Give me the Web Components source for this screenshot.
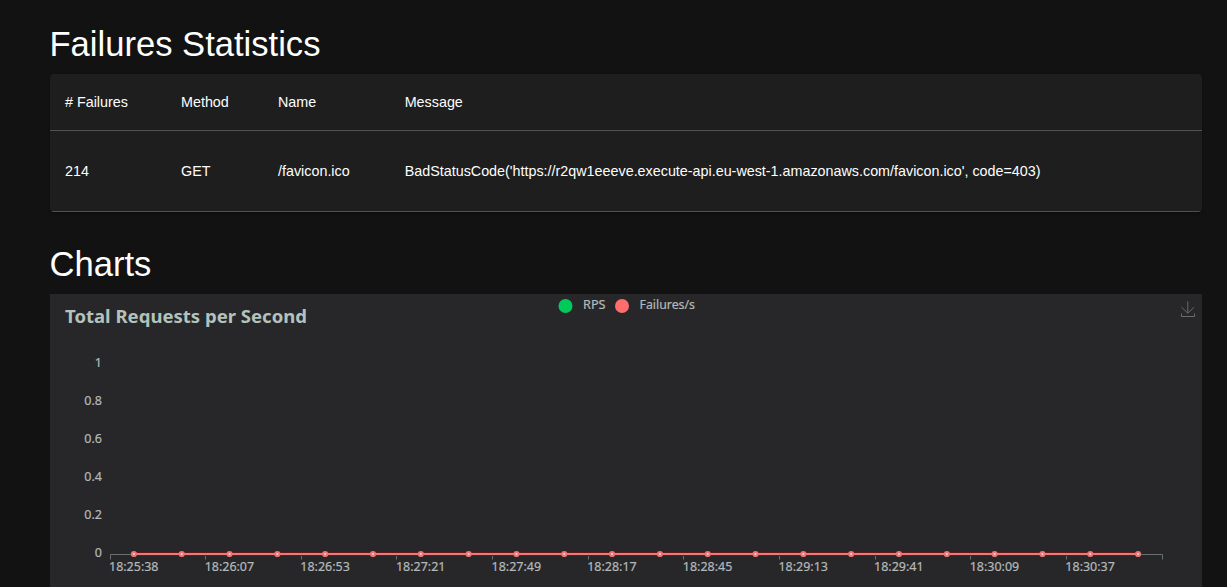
<!DOCTYPE html>
<html lang="en">
<head>
<meta charset="utf-8">
<title>Report</title>
<style>
  body { margin: 0; background: #121212; color: #fff; font-family: "Liberation Sans", Arial, sans-serif; overflow: hidden; }
</style>
</head>
<body>
<report-page>
  <report-section heading="Failures Statistics"><failures-table></failures-table></report-section>
  <report-section heading="Charts"><requests-chart></requests-chart></report-section>
</report-page>
<script>
const define = (name, html, setup) => customElements.define(name, class extends HTMLElement {
  constructor() {
    super();
    this.attachShadow({ mode: "open" }).innerHTML = html;
  }
  connectedCallback() { if (setup) setup(this, this.shadowRoot); }
});

define("report-page", `
<style>
  :host { display: flex; flex-direction: column; gap: 31px; box-sizing: border-box; height: 587px; overflow: hidden; padding: 23px 25px 0 50px; }
</style>
<slot></slot>`);

define("report-section", `
<style>
  :host { display: block; flex: none; }
  h4 { margin: 0 0 9px -.5px; font-size: 34.6px; font-weight: 400; line-height: 42px; }
</style>
<h4></h4><slot></slot>`, (el, root) => {
  root.querySelector("h4").textContent = el.getAttribute("heading");
});

define("failures-table", `
<style>
  :host { display: block; height: 138px; background: #1e1e1e; border-radius: 4px; overflow: hidden;
    box-shadow: 0 2px 1px -1px rgba(0,0,0,.2), 0 1px 1px rgba(0,0,0,.14), 0 1px 3px rgba(0,0,0,.12); }
  .row { display: grid; grid-template-columns: 116px 97px 126.7px 1fr; align-items: center; box-sizing: border-box;
    padding-left: 15px; border-bottom: 1px solid #515151; font-size: 14.33px; white-space: nowrap; }
  .head { height: 57px; }
  .data { height: 81px; }
</style>
<div class="row head"><span>#&nbsp;Failures</span><span>Method</span><span>Name</span><span>Message</span></div>
<div class="row data"><span>214</span><span>GET</span><span>/favicon.ico</span><span>BadStatusCode('https://r2qw1eeeve.execute-api.eu-west-1.amazonaws.com/favicon.ico', code=403)</span></div>`);

define("requests-chart", `
<style>
  :host { display: block; height: 300px; background: #27272a; }
  svg { display: block; font-family: "Noto Sans", "Open Sans", sans-serif; font-size: 12.5px; fill: #b3c3bc; }
  .title { font-size: 18.5px; font-weight: 700; }
  .label { fill: #b4b9b9; stroke: #b4b9b9; stroke-width: .2px; }
  .axis { stroke: #69716f; fill: none; }
</style>
<svg width="1152" height="300" viewBox="50 294 1152 300">
  <text class="title" x="65" y="323" textLength="242" lengthAdjust="spacingAndGlyphs">Total Requests per Second</text>
  <circle cx="565.5" cy="306" r="7" fill="#00ca5a"/>
  <text class="label" x="583" y="309" textLength="22.5" lengthAdjust="spacingAndGlyphs">RPS</text>
  <circle cx="622" cy="306" r="7" fill="#ff6d6d"/>
  <text class="label" x="639.5" y="309" textLength="55.5" lengthAdjust="spacingAndGlyphs">Failures/s</text>
  <path d="M1187.8 301.5V313M1181.5 307.2l6.3 6 6.3-6M1181.5 313.5v3h13v-3" fill="none" stroke="#6a6a6a"/>
  <g id="plot"></g>
</svg>`, (el, root) => {
  const left = 110, right = 1162, base = 554.5, step = (right - left) / 22;
  const times = ["18:25:38", "18:26:07", "18:26:53", "18:27:21", "18:27:49", "18:28:17", "18:28:45", "18:29:13", "18:29:41", "18:30:09", "18:30:37"];
  let out = "";
  ["1", "0.8", "0.6", "0.4", "0.2", "0"].forEach((t, i) => {
    out += `<text class="label" text-anchor="end" x="102" y="${367 + i * 38}">${t}</text>`;
  });
  let axis = `M${left + .5} ${base}H${right + .5}v5`;
  times.forEach((t, i) => {
    axis += `M${Math.floor(left + i * 2 * step) + .5} ${base}v5`;
    out += `<text class="label" x="${left + (2 * i + .5) * step - 24.9}" y="571" textLength="49.5" lengthAdjust="spacingAndGlyphs">${t}</text>`;
  });
  out += `<path class="axis" d="${axis}"/>`;
  const x0 = left + step / 2, x1 = x0 + 21 * step;
  out += `<path d="M${x0} 554H${x1}" stroke="#61191b" stroke-width="4"/><path d="M${x0} 554H${x1}" stroke="#e87c7b" stroke-width="2"/>`;
  for (let i = 0; i < 22; i++) out += `<circle cx="${x0 + i * step}" cy="554" r="2.1" fill="#ffd6d2" stroke="#ec7472" stroke-width="2"/>`;
  root.querySelector("#plot").innerHTML = out;
});
</script>
</body>
</html>
